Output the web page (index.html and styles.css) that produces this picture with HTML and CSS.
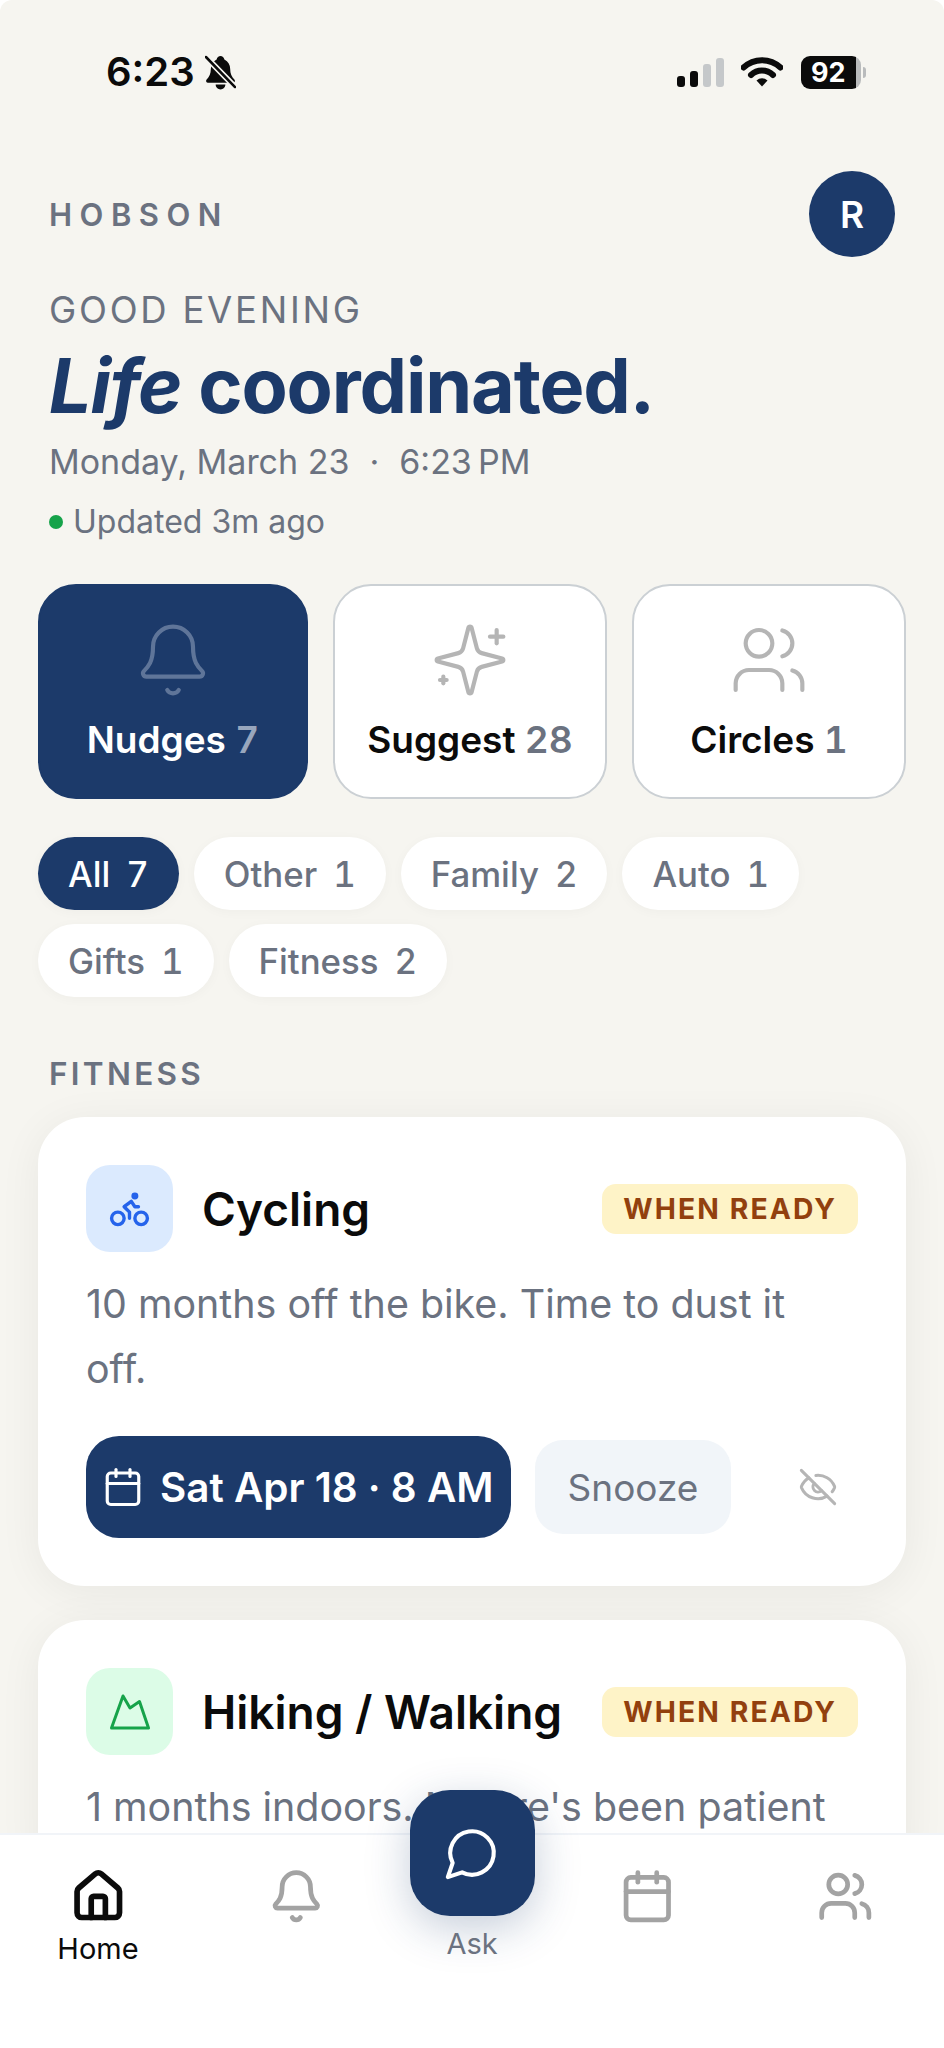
FILE: index.html
```html
<!DOCTYPE html>
<html lang="en">
<head>
<meta charset="utf-8">
<title>Hobson</title>
<link rel="stylesheet" href="styles.css">
</head>
<body>
<div class="screen">
  <div class="status">
    <div class="status-left">
      <span class="clock">6:23</span>
      <svg class="mute" viewBox="0 0 32 36"><path d="M16 1c2 0 3.500 1.500 4 3.500 4 2 6 5.500 6 10 0 5 1.500 8 4.500 11 1 1.500 0 3-1.500 3H3c-1.500 0-2.500-1.500-1.500-3C4.500 22.500 6 19.500 6 14.500c0-4.500 2-8 6-10C12.500 2.500 14 1 16 1z" fill="#0b0b0b"/><path d="M11 30.500h10c0 3-2.200 5-5 5s-5-2-5-5z" fill="#0b0b0b"/><path d="M1 2l30 31" stroke="#f6f5f0" stroke-width="6"/><path d="M1 2l30 31" stroke="#0b0b0b" stroke-width="2.600"/></svg>
    </div>
    <div class="status-right">
      <div class="signal"><i class="bar b1"></i><i class="bar b2"></i><i class="bar b3"></i><i class="bar b4"></i></div>
      <svg class="wifi" viewBox="0 0 42 32" fill="none" stroke="#0b0b0b" stroke-width="6"><path d="M2.500 11.500a27 27 0 0 1 37 0"/><path d="M10 19a16 16 0 0 1 22 0"/><path d="M15.500 24.500l5.500 6 5.500-6a8 8 0 0 0-11 0z" fill="#0b0b0b" stroke="none"/></svg>
      <div class="battery"><span class="battery-level">92</span><i class="battery-nub"></i></div>
    </div>
  </div>

  <main class="content">
    <header class="brand-row">
      <span class="brand">HOBSON</span>
      <span class="avatar">R</span>
    </header>
    <p class="greeting">GOOD EVENING</p>
    <h1 class="headline"><em>Life</em> coordinated.</h1>
    <p class="date"><span>Monday, March 23</span><span class="sep">·</span><span>6:23&thinsp;PM</span></p>
    <p class="updated"><i class="dot"></i>Updated 3m ago</p>

    <section class="tabs">
      <div class="tab tab-active">
        <svg class="tab-icon" viewBox="0 0 24 24"><path d="M10.268 21a2 2 0 0 0 3.464 0"/><path d="M3.262 15.326A1 1 0 0 0 4 17h16a1 1 0 0 0 .74-1.673C19.410 13.956 18 12.499 18 8A6 6 0 0 0 6 8c0 4.499-1.411 5.956-2.738 7.326"/></svg>
        <span class="tab-label">Nudges <b>7</b></span>
      </div>
      <div class="tab">
        <svg class="tab-icon" viewBox="0 0 24 24"><path d="M9.937 15.500A2 2 0 0 0 8.500 14.063l-6.135-1.582a.5.5 0 0 1 0-.962L8.500 9.936A2 2 0 0 0 9.937 8.500l1.582-6.135a.5.5 0 0 1 .963 0L14.063 8.500A2 2 0 0 0 15.500 9.937l6.135 1.581a.5.5 0 0 1 0 .964L15.500 14.063a2 2 0 0 0-1.437 1.437l-1.582 6.135a.5.5 0 0 1-.963 0z"/><path d="M20 3v4"/><path d="M22 5h-4"/><path d="M4 17v2"/><path d="M5 18H3"/></svg>
        <span class="tab-label">Suggest <b>28</b></span>
      </div>
      <div class="tab">
        <svg class="tab-icon" viewBox="0 0 24 24"><path d="M16 21v-2a4 4 0 0 0-4-4H6a4 4 0 0 0-4 4v2"/><circle cx="9" cy="7" r="4"/><path d="M22 21v-2a4 4 0 0 0-3-3.870"/><path d="M16 3.130a4 4 0 0 1 0 7.750"/></svg>
        <span class="tab-label">Circles <b>1</b></span>
      </div>
    </section>

    <section class="chips">
      <span class="chip chip-active">All<b>7</b></span>
      <span class="chip">Other<b>1</b></span>
      <span class="chip">Family<b>2</b></span>
      <span class="chip">Auto<b>1</b></span>
      <span class="chip">Gifts<b>1</b></span>
      <span class="chip">Fitness<b>2</b></span>
    </section>

    <h2 class="section-title">FITNESS</h2>

    <article class="card">
      <div class="card-head">
        <span class="card-icon icon-blue">
          <svg viewBox="0 0 24 24"><circle cx="18.500" cy="17.500" r="3.500"/><circle cx="5.500" cy="17.500" r="3.500"/><circle cx="15" cy="5" r="1"/><path d="M12 17.500V14l-3-3 4-3 2 3h2"/></svg>
        </span>
        <h3 class="card-title">Cycling</h3>
        <span class="badge">WHEN READY</span>
      </div>
      <p class="card-text">10 months off the bike. Time to dust it off.</p>
      <div class="actions">
        <button class="btn-primary">
          <svg viewBox="0 0 24 24"><path d="M8 2v4"/><path d="M16 2v4"/><rect x="3" y="4" width="18" height="18" rx="2"/><path d="M3 10h18"/></svg>
          Sat Apr 18 · 8 AM
        </button>
        <button class="btn-soft">Snooze</button>
        <svg class="hide-icon" viewBox="0 0 24 24"><path d="M10.733 5.076a10.744 10.744 0 0 1 11.205 6.575 1 1 0 0 1 0 .696 10.747 10.747 0 0 1-1.444 2.490"/><path d="M14.084 14.158a3 3 0 0 1-4.242-4.242"/><path d="M17.479 17.499a10.750 10.750 0 0 1-15.417-5.151 1 1 0 0 1 0-.696 10.750 10.750 0 0 1 4.446-5.143"/><path d="m2 2 20 20"/></svg>
      </div>
    </article>

    <article class="card">
      <div class="card-head">
        <span class="card-icon icon-green">
          <svg viewBox="0 0 40 36"><path d="M13 2l7 12 9.500-6.500L38.500 34h-37z"/></svg>
        </span>
        <h3 class="card-title">Hiking / Walking</h3>
        <span class="badge">WHEN READY</span>
      </div>
      <p class="card-text">1 months indoors. Nature's been patient</p>
    </article>
  </main>

  <nav class="nav">
    <div class="nav-item nav-current">
      <svg viewBox="0 0 24 24"><path d="M15 21v-8a1 1 0 0 0-1-1h-4a1 1 0 0 0-1 1v8"/><path d="M3 10a2 2 0 0 1 .709-1.528l7-5.999a2 2 0 0 1 2.582 0l7 5.999A2 2 0 0 1 21 10v9a2 2 0 0 1-2 2H5a2 2 0 0 1-2-2z"/></svg>
      <span>Home</span>
    </div>
    <div class="nav-item">
      <svg viewBox="0 0 24 24"><path d="M10.268 21a2 2 0 0 0 3.464 0"/><path d="M3.262 15.326A1 1 0 0 0 4 17h16a1 1 0 0 0 .74-1.673C19.410 13.956 18 12.499 18 8A6 6 0 0 0 6 8c0 4.499-1.411 5.956-2.738 7.326"/></svg>
    </div>
    <div class="nav-item nav-ask">
      <div class="fab">
        <svg viewBox="0 0 24 24"><path d="M7.900 20A9 9 0 1 0 4 16.100L2 22Z"/></svg>
      </div>
      <span>Ask</span>
    </div>
    <div class="nav-item">
      <svg viewBox="0 0 24 24"><path d="M8 2v4"/><path d="M16 2v4"/><rect x="3" y="4" width="18" height="18" rx="2"/><path d="M3 10h18"/></svg>
    </div>
    <div class="nav-item">
      <svg viewBox="0 0 24 24"><path d="M16 21v-2a4 4 0 0 0-4-4H6a4 4 0 0 0-4 4v2"/><circle cx="9" cy="7" r="4"/><path d="M22 21v-2a4 4 0 0 0-3-3.870"/><path d="M16 3.130a4 4 0 0 1 0 7.750"/></svg>
    </div>
  </nav>
</div>
</body>
</html>
```

FILE: styles.css
```css
* { box-sizing: border-box; }
html, body { margin: 0; padding: 0; background: #fff; }
body { font-family: Inter, "Noto Sans", sans-serif; }
p, h1, h2, h3 { margin: 0; font-weight: inherit; }
svg { display: block; fill: none; stroke-linecap: round; stroke-linejoin: round; }
i { display: block; }

.screen {
  position: relative;
  width: 944px;
  height: 2048px;
  overflow: hidden;
  background: #f6f5f0;
  border-radius: 12px 12px 0 0;
}

/* status bar */
.status {
  display: flex;
  justify-content: space-between;
  align-items: center;
  height: 44px;
  margin-top: 50px;
  padding: 0 78px 0 106px;
}
.status-left { display: flex; align-items: center; gap: 10px; }
.clock { font-size: 40px; line-height: 44px; font-weight: 600; color: #0b0b0b; }
.mute { width: 31px; height: 35px; }
.status-right { display: flex; align-items: center; }
.signal { display: flex; align-items: flex-end; gap: 5px; height: 29px; margin-right: 17px; }
.bar { width: 8px; border-radius: 3px; background: #0b0b0b; }
.b1 { height: 11px; }
.b2 { height: 16px; }
.b3 { height: 23px; background: #c5c8ca; }
.b4 { height: 29px; background: #c5c8ca; }
.wifi { width: 42px; height: 32px; margin-right: 18px; }
.battery { display: flex; align-items: center; gap: 2px; }
.battery-level {
  width: 60px;
  height: 33px;
  border-radius: 9px;
  background: linear-gradient(90deg, #0b0b0b 91%, #b9bbbc 91%);
  color: #fff;
  font-size: 27px;
  line-height: 33px;
  font-weight: 700;
  padding-left: 10px;
}
.battery-nub { width: 3px; height: 11px; border-radius: 0 3px 3px 0; background: #b9bbbc; }

/* content */
.content { padding: 77px 38px 0; }
.brand-row {
  display: flex;
  justify-content: space-between;
  align-items: center;
  height: 86px;
  padding: 0 11px;
}
.brand { font-size: 31px; font-weight: 600; letter-spacing: 7.500px; color: #6b7280; }
.avatar {
  display: flex;
  align-items: center;
  justify-content: center;
  width: 86px;
  height: 86px;
  border-radius: 50%;
  background: #1c3a6a;
  color: #fff;
  font-size: 37px;
  font-weight: 600;
}
.greeting, .headline, .date, .updated { padding-left: 11px; }
.greeting { margin-top: 31px; font-size: 36.500px; line-height: 44px; letter-spacing: 2.750px; font-weight: 400; color: #6b7280; }
.headline { margin-top: 12px; font-size: 75.500px; line-height: 84px; font-weight: 700; letter-spacing: -1.150px; color: #1c3a6a; }
.date { display: flex; margin-top: 12px; font-size: 34px; line-height: 44px; color: #6b7280; }
.sep { margin: 0 20px; }
.updated { display: flex; align-items: center; margin-top: 18px; font-size: 32px; line-height: 40px; color: #6b7280; }
.dot { width: 14px; height: 14px; margin-right: 10px; border-radius: 50%; background: #16a34a; }

/* tabs */
.tabs { display: grid; grid-template-columns: 269fr 273fr 273fr; column-gap: 25px; margin-top: 42px; }
.tab {
  display: flex;
  flex-direction: column;
  align-items: center;
  height: 215px;
  padding-top: 34px;
  border: 2px solid #cbd0d4;
  border-radius: 38px;
  background: #fff;
}
.tab-icon { width: 80px; height: 80px; stroke: #b5b5b5; stroke-width: 1.250; }
.tab-label { margin-top: 18px; font-size: 37px; line-height: 44px; font-weight: 600; color: #0b0b0b; }
.tab-label b { font-weight: 600; color: #6b7280; font-variant-numeric: tabular-nums; }
.tab-active { background: #1c3a6a; border-color: #1c3a6a; }
.tab-active .tab-icon { stroke: #5f7599; }
.tab-active .tab-label { color: #fff; }
.tab-active .tab-label b { color: #98a6bd; }

/* chips */
.chips { display: flex; flex-wrap: wrap; gap: 14px 15px; margin-top: 38px; }
.chip {
  display: flex;
  align-items: center;
  height: 73px;
  padding: 0 30px;
  border-radius: 37px;
  background: #fff;
  box-shadow: 0 2px 12px rgba(0, 0, 0, 0.03);
  font-size: 34.800px;
  font-weight: 500;
  color: #6b7280;
}
.chip b { margin-left: 16px; font-weight: 500; font-variant-numeric: tabular-nums; }
.chip-active { background: #1c3a6a; color: #fff; }

.section-title {
  margin: 59px 0 25px;
  padding-left: 11px;
  font-size: 31.500px;
  line-height: 36px;
  font-weight: 600;
  letter-spacing: 3.300px;
  color: #6b7280;
}

/* cards */
.card {
  margin-bottom: 34px;
  padding: 48px;
  border-radius: 47px;
  background: #fff;
  box-shadow: 0 6px 44px rgba(0, 0, 0, 0.06);
}
.card-head { display: flex; align-items: center; }
.card-icon {
  display: flex;
  align-items: center;
  justify-content: center;
  flex: none;
  width: 87px;
  height: 87px;
  margin-right: 29px;
  border-radius: 24px;
}
.card-icon svg { width: 43px; height: 43px; stroke-width: 1.900; }
.icon-blue { background: #dbeafe; }
.icon-blue svg { stroke: #2563eb; }
.icon-green { background: #dcfce7; }
.icon-green svg { width: 40px; height: 36px; stroke: #16a34a; stroke-width: 3; }
.card-title { font-size: 46px; line-height: 56px; font-weight: 600; color: #0b0b0b; }
.badge {
  margin-left: auto;
  height: 50px;
  padding: 0 21px;
  border-radius: 14px;
  background: #fef3c7;
  color: #92400e;
  font-size: 28.300px;
  line-height: 50px;
  font-weight: 700;
  letter-spacing: 2.100px;
}
.card-text { max-width: 750px; margin-top: 19.500px; font-size: 39.400px; line-height: 65px; color: #6b7280; }
.actions { display: flex; align-items: center; margin-top: 34.500px; }
.btn-primary, .btn-soft { border: 0; font-family: inherit; }
.btn-primary {
  display: flex;
  align-items: center;
  gap: 16px;
  height: 102px;
  padding: 0 17px 0 16px;
  border-radius: 33px;
  background: #1c3a6a;
  color: #fff;
  font-size: 40.400px;
  font-weight: 600;
}
.btn-primary svg { width: 42px; height: 42px; stroke: #fff; stroke-width: 1.800; }
.btn-soft {
  height: 94px;
  margin-left: 24px;
  padding: 0 33px;
  border-radius: 28px;
  background: #f1f5f9;
  color: #6b7280;
  font-size: 37px;
}
.hide-icon { width: 40px; height: 40px; margin-left: 67px; stroke: #b5b5b5; stroke-width: 1.800; }

/* bottom nav */
.nav {
  position: absolute;
  left: 0;
  right: 0;
  bottom: 0;
  display: grid;
  grid-template-columns: 196px 200px 152px 198px 198px;
  height: 215px;
  padding-top: 33px;
  border-top: 2px solid #f1f4f8;
  background: #fff;
}
.nav-item {
  display: flex;
  flex-direction: column;
  align-items: center;
  font-size: 29px;
  line-height: 36px;
  color: #6b7280;
}
.nav-item > svg { width: 56.600px; height: 56.600px; margin-bottom: 6px; stroke: #a3a3a3; stroke-width: 2; }
.nav-current { color: #0b0b0b; }
.nav-current > svg { stroke: #0b0b0b; stroke-width: 2.400; }
.fab {
  display: flex;
  align-items: center;
  justify-content: center;
  flex: none;
  width: 125px;
  height: 126px;
  margin: -78px 0 10px;
  border-radius: 40px;
  background: #1c3a6a;
  box-shadow: 0 12px 44px rgba(28, 58, 106, 0.25);
}
.fab svg { width: 58px; height: 58px; stroke: #fff; stroke-width: 1.700; }
```
